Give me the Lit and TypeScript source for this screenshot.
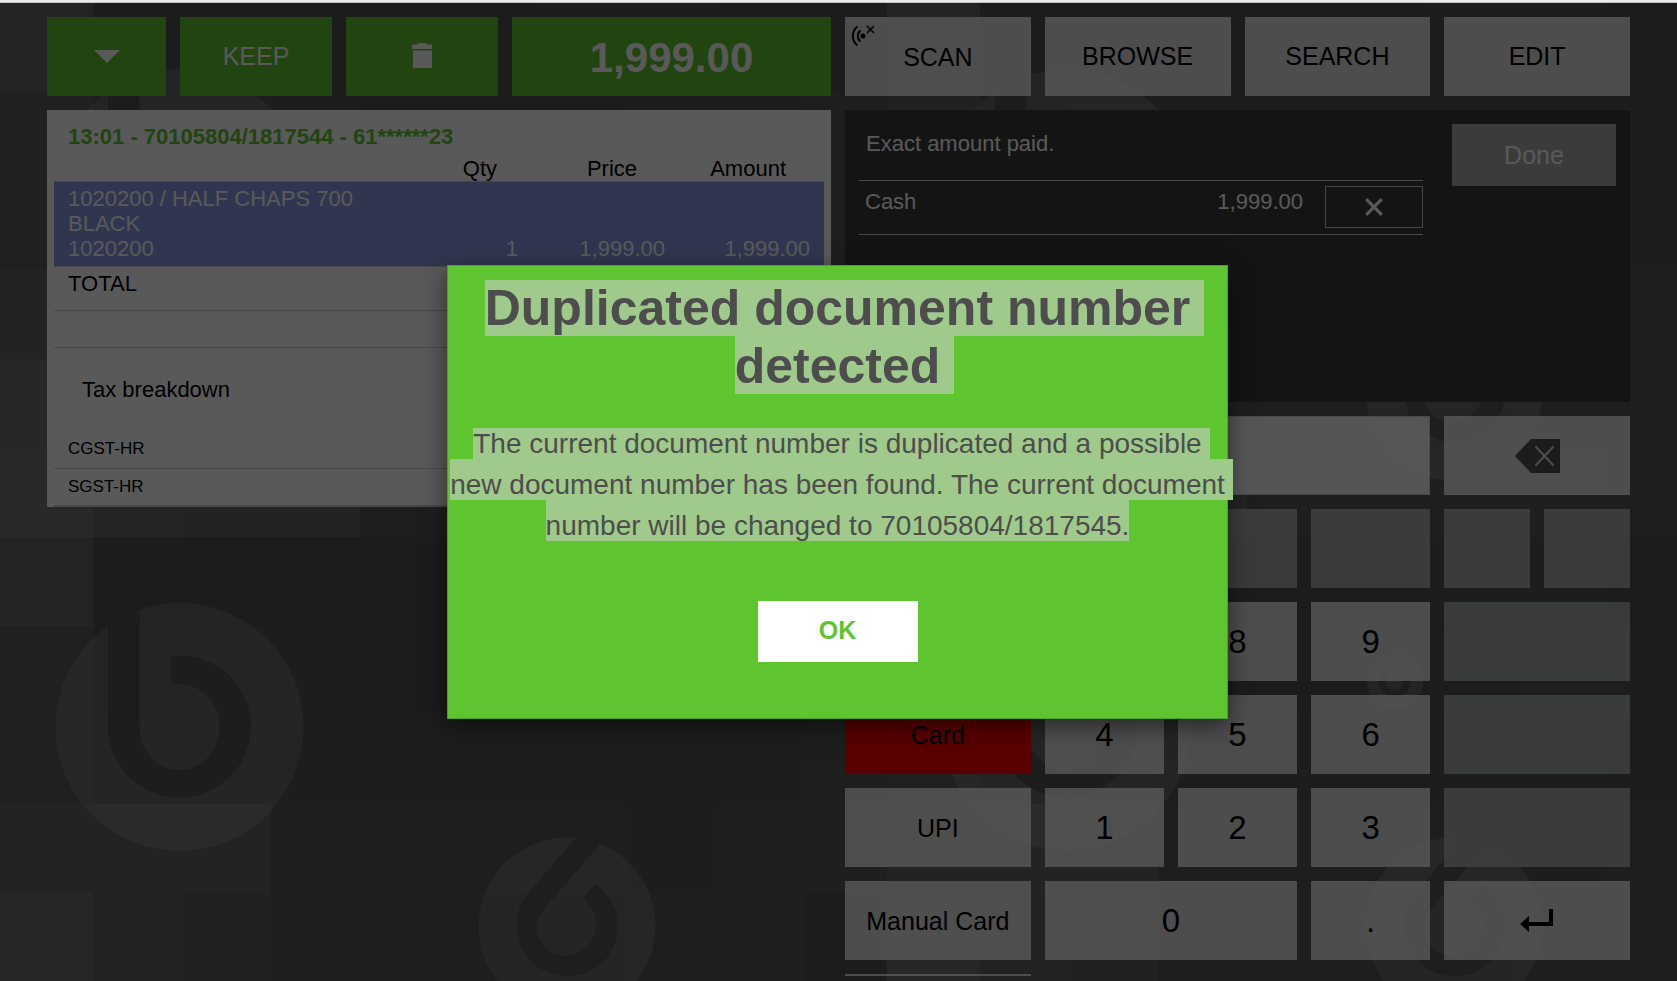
import { LitElement, html, css, svg, nothing } from "lit";
import { customElement } from "lit/decorators.js";

const SHADES = [
  ["#676767", "#505050", "#525252", "#525252", "#505050", "#525252", "#545454", "#545454", "#505050", "#525252"],
  ["#5c5c5c", "#525252", "#545454", "#545454", "#525252", "#525252", "#525252", "#545454", "#545454", "#565656"],
  ["#5c5c5c", "#545454", "#545454", "#535353", "#535353", "#535353", "#555555", "#555555", "#535353", "#565656"],
  ["#666666", "#656565", "#656565", "#585858", "#585858", "#585858", "#585858", "#555555", "#585858", "#5b5b5b"],
  ["#707070", "#626262", "#606060", "#585858", "#585858", "#565656", "#565656", "#585858", "#565656", "#525252"],
  ["#777777", "#676767", "#666666", "#656565", "#585858", "#585858", "#5a5a5a", "#5a5a5a", "#585858", "#5c5c5c"],
];

/** Tiled wallpaper: a chequer of greys with three brand marks. */
@customElement("pos-wallpaper")
export class PosWallpaper extends LitElement {
  static styles = css`
    :host { display: block; }
    svg { display: block; width: 100%; height: 100%; }
  `;

  private mark(x: number, y: number, scale: number, turn: number) {
    return svg`<g transform="translate(${x} ${y}) rotate(${turn}) scale(${scale})">
      <circle r="124" fill="#fff" fill-opacity=".13" mask="url(#cut)"></circle>
    </g>`;
  }

  render() {
    return html`<svg aria-hidden="true">
      <defs>
        <mask id="cut" maskUnits="userSpaceOnUse" x="-130" y="-130" width="260" height="260">
          <rect x="-130" y="-130" width="260" height="260" fill="#fff"></rect>
          <path fill="#000" d="M-71.5-130V0A71.5 71 0 1 0-8-71V-43H0A40 43 0 1 1-40 0V-130Z"></path>
        </mask>
        <pattern id="tile" width="887" height="534" patternUnits="userSpaceOnUse">
          ${SHADES.map((row, r) => row.map((fill, c) => svg`<rect
            x=${c ? c * 89 + 4 : 0} y=${r * 89} width=${c ? 89 : 93} height="89" fill=${fill}></rect>`))}
          ${this.mark(179.5, 190, 1, 0)}
          ${this.mark(567, 389, 0.713, 41)}
          ${this.mark(508, 144, 0.226, 20)}
        </pattern>
      </defs>
      <rect width="100%" height="100%" fill="url(#tile)"></rect>
    </svg>`;
  }
}

const ICONS = {
  caret: svg`<svg width="26" height="13" viewBox="0 0 26 13" aria-hidden="true"><path d="M0 0h26L13 13z"></path></svg>`,
  trash: svg`<svg width="22" height="26" viewBox="0 0 22 26" aria-hidden="true">
    <path d="M1 6V2.500Q1 1.500 2 1.500H6Q7 0 8 0h6q1 0 2 1.500h4Q21 1.500 21 2.500V6H1zM2 7.500h19V25H2z"></path></svg>`,
  signal: svg`<svg width="24" height="24" viewBox="0 0 24 24" aria-hidden="true" fill="none" stroke="#000" stroke-width="2">
    <path d="M6.500 2.500A12 12 0 0 0 6.500 21.500M9.500 6.500A7 7 0 0 0 9.500 17.500"></path>
    <circle cx="12" cy="12" r="2.500" fill="#000" stroke="none"></circle>
    <path stroke-width="1.500" d="M16 2l7 7M23 2l-7 7"></path></svg>`,
  cross: svg`<svg width="18" height="18" viewBox="0 0 18 18" aria-hidden="true" fill="none" stroke="#fff" stroke-width="3.200">
    <path d="M1.200 1.200l15.600 15.600M16.800 1.200l-15.600 15.600"></path></svg>`,
  erase: svg`<svg width="45" height="34" viewBox="0 0 45 34" aria-hidden="true">
    <path fill="#505050" d="M0 17L16 0h29v34H16z"></path>
    <path fill="none" stroke="#dfdfdf" stroke-width="2" d="M20.500 7.500l18 19M38.500 7.500l-18 19"></path></svg>`,
  enter: svg`<svg width="34" height="24" viewBox="0 0 34 24" aria-hidden="true">
    <path d="M29 0h4v17H9v6L0 15l9-8v6h20z"></path></svg>`,
};

@customElement("app-root")
export class AppRoot extends LitElement {
  static styles = css`
    * { box-sizing: border-box; }
    :host {
      --green: #5ec42f;
      --gap: 14px;
      --key: 79px;
      display: block;
      position: relative;
      height: 100vh;
      overflow: hidden;
      font-family: "Liberation Sans", Arial, sans-serif;
      font-size: 22px;
      line-height: 25px;
      color: #000;
    }
    .strip { height: 3px; background: #ebebeb; border-bottom: 1px solid #c4c4c4; }
    .stage { position: relative; height: calc(100% - 3px); overflow: hidden; }
    pos-wallpaper { position: absolute; inset: 0; }
    .app {
      position: relative;
      display: grid;
      grid-template-columns: 784fr 785fr;
      gap: var(--gap);
      padding: 14px 47px 5px;
      height: 100%;
    }
    .col { display: flex; flex-direction: column; gap: var(--gap); min-width: 0; min-height: 0; }
    button {
      display: flex;
      align-items: center;
      justify-content: center;
      margin: 0;
      padding: 0;
      border: 0;
      border-radius: 0;
      font: inherit;
      font-size: 25px;
      line-height: 28px;
      color: #000;
      background: rgba(255, 255, 255, 0.8);
    }
    .bar { display: grid; gap: var(--gap); grid-auto-rows: var(--key); flex: none; }
    .bar.receipt-bar { grid-template-columns: 119fr 152fr 152fr 319fr; }
    .bar.menu-bar { grid-template-columns: repeat(4, 1fr); }
    .bar button { padding-bottom: 1px; }
    .go { background: var(--green); color: #fff; fill: #fff; }
    .bar .sum { font-size: 42px; font-weight: bold; line-height: 48px; padding-top: 4px; }
    .bar .scan { position: relative; padding-bottom: 0; }
    .scan svg { position: absolute; left: 6px; top: 7px; }

    .receipt { background: #fff; padding: 14px 7px 0; }
    h2 { margin: 0 0 7px; padding: 0 14px; font-size: 22px; line-height: 25px; color: var(--green); }
    table { width: 100%; border-collapse: collapse; table-layout: fixed; }
    th { font-weight: normal; padding: 0; text-align: right; border-bottom: 1px solid #cfcfcf; }
    td { padding: 4px 14px; text-align: left; border-bottom: 1px solid #cfcfcf; }
    .qty { width: 100px; }
    .price { width: 147px; }
    .amount { width: 145px; }
    th.qty { padding-right: 35px; }
    th.price { padding-right: 42px; }
    th.amount { padding-right: 38px; }
    td.num { text-align: right; vertical-align: bottom; }
    .picked { background: #899ae2; color: #fff; }
    .picked td { padding-bottom: 5px; }
    .total td { padding-bottom: 14px; }
    .blank td { height: 37px; }
    h3 { margin: 0; padding: 29px 28px; font-size: 22px; line-height: 25px; font-weight: normal; }
    .tax { border-bottom: 2px solid #cfcfcf; }
    .tax td { height: 37px; padding: 8px 14px; font-size: 17px; line-height: 20px; }

    .payment {
      flex: none;
      display: grid;
      grid-template-columns: 1fr 164px;
      gap: 29px;
      align-items: start;
      height: 292px;
      padding: 14px;
      background: #393939;
      color: #fff;
    }
    .payment p { margin: 0; padding: 7px 7px 24px; }
    .line {
      display: grid;
      grid-template-columns: 1fr auto 98px;
      gap: 22px;
      padding: 5px 0 6px;
      border: solid #d0d0d0;
      border-width: 1px 0;
    }
    .line span { padding: 3px 6px; }
    .line .money { padding-right: 0; }
    .line button { height: 42px; background: none; border: 1px solid #c8c8c8; }
    .done { height: 62px; background: #a5a9a7; color: #fff; }

    .pad { display: grid; grid-template-columns: 186fr 386fr 186fr; gap: var(--gap); flex: 1; min-height: 0; overflow: hidden; }
    .methods { display: flex; flex-direction: column; gap: var(--gap); }
    .methods button { flex: none; height: var(--key); }
    .methods .alert { background: #f00; }
    .keys { display: grid; grid-template-columns: repeat(3, 1fr); grid-auto-rows: var(--key); gap: var(--gap); }
    .side { display: grid; grid-template-columns: 1fr 1fr; grid-auto-rows: var(--key); gap: var(--gap); }
    .keys button { font-size: 33px; line-height: 38px; }
    button.off { background: rgba(184, 192, 187, 0.8); }
    input {
      grid-column: 1 / -1;
      width: 100%;
      height: 100%;
      padding: 0 14px;
      border: 1px solid #d0d0d0;
      border-radius: 0;
      font: inherit;
      background: rgba(255, 255, 255, 0.93);
    }
    .wide { grid-column: span 2; }

    .veil {
      position: absolute;
      inset: 0;
      display: flex;
      align-items: center;
      justify-content: center;
      padding-right: 2px;
      background: rgba(0, 0, 0, 0.65);
    }
    .dialog {
      display: flex;
      flex-direction: column;
      align-items: center;
      width: 781px;
      max-width: 100%;
      height: 454px;
      padding-top: 13px;
      border: 1px solid #4ba026;
      background: var(--green);
      box-shadow: 0 7px 22px rgba(0, 0, 0, 0.5);
      color: #4d4d4d;
      text-align: center;
      white-space: nowrap;
    }
    h1 { margin: 0; font-size: 50px; line-height: 58px; }
    .dialog p { margin: 0; padding-top: 28px; font-size: 28px; line-height: 41px; }
    mark { color: inherit; background: #a0ca8b; }
    h1 mark { padding-right: 14px; margin-right: -14px; }
    h1 mark + br + mark { padding-top: 2px; }
    p mark.more { padding-right: 8px; margin-right: -8px; }
    p mark + br + mark { padding-top: 10px; }
    .ok { width: 160px; height: 61px; margin-top: 55px; background: #fff; color: var(--green); font-weight: bold; padding-bottom: 3px; }
  `;

  private key(label: unknown, cls = "", name?: string) {
    return html`<button type="button" class=${cls} aria-label=${name ?? nothing}>${label}</button>`;
  }

  private off(cls = "") {
    return html`<button type="button" class="off ${cls}" disabled aria-label="Unassigned key"></button>`;
  }

  render() {
    return html`
      <div class="strip"></div>
      <div class="stage">
        <pos-wallpaper></pos-wallpaper>
        <main class="app">
          <section class="col">
            <div class="bar receipt-bar">
              ${this.key(ICONS.caret, "go", "More")}
              ${this.key("KEEP", "go")}
              ${this.key(ICONS.trash, "go", "Delete")}
              ${this.key("1,999.00", "go sum")}
            </div>
            <div class="receipt">
              <h2>13:01 - 70105804/1817544 - 61******23</h2>
              <table>
                <thead>
                  <tr><th></th><th class="qty">Qty</th><th class="price">Price</th><th class="amount">Amount</th></tr>
                </thead>
                <tbody>
                  <tr class="picked">
                    <td>1020200 / HALF CHAPS 700 BLACK<br>1020200</td>
                    <td class="num">1</td><td class="num">1,999.00</td><td class="num">1,999.00</td>
                  </tr>
                  <tr class="total"><td colspan="4">TOTAL</td></tr>
                  <tr class="blank"><td colspan="4"></td></tr>
                </tbody>
              </table>
              <h3>Tax breakdown</h3>
              <table class="tax">
                <tbody>
                  <tr><td>CGST-HR</td></tr>
                  <tr><td>SGST-HR</td></tr>
                </tbody>
              </table>
            </div>
          </section>

          <section class="col">
            <div class="bar menu-bar">
              ${this.key(html`${ICONS.signal}SCAN`, "scan")}
              ${this.key("BROWSE")} ${this.key("SEARCH")} ${this.key("EDIT")}
            </div>
            <div class="payment">
              <div>
                <p>Exact amount paid.</p>
                <div class="line">
                  <span>Cash</span><span class="money">1,999.00</span>
                  ${this.key(ICONS.cross, "", "Remove payment")}
                </div>
              </div>
              ${this.key("Done", "done")}
            </div>
            <div class="pad">
              <div class="methods">
                ${this.off()} ${this.off()} ${this.key("Cash")}
                ${this.key("Card", "alert")} ${this.key("UPI")} ${this.key("Manual Card")}
                ${this.key("")}
              </div>
              <div class="keys">
                <input type="text" aria-label="Entry">
                ${this.off()} ${this.off()} ${this.off()}
                ${["7", "8", "9", "4", "5", "6", "1", "2", "3"].map((n) => this.key(n))}
                ${this.key("0", "wide")} ${this.key(".")}
              </div>
              <div class="side">
                ${this.key(ICONS.erase, "wide", "Backspace")}
                ${this.off()} ${this.off()}
                ${this.off("wide")} ${this.off("wide")} ${this.off("wide")}
                ${this.key(ICONS.enter, "wide", "Enter")}
              </div>
            </div>
          </section>
        </main>
        <div class="veil">
          <div class="dialog" role="dialog" aria-modal="true" aria-labelledby="title">
            <h1 id="title"><mark>Duplicated document number</mark><br><mark>detected</mark></h1>
            <p><mark class="more">The current document number is duplicated and a possible</mark><br><mark
              class="more">new document number has been found. The current document</mark><br><mark>number will be changed to 70105804/1817545.</mark></p>
            <button type="button" class="ok">OK</button>
          </div>
        </div>
      </div>
    `;
  }
}
